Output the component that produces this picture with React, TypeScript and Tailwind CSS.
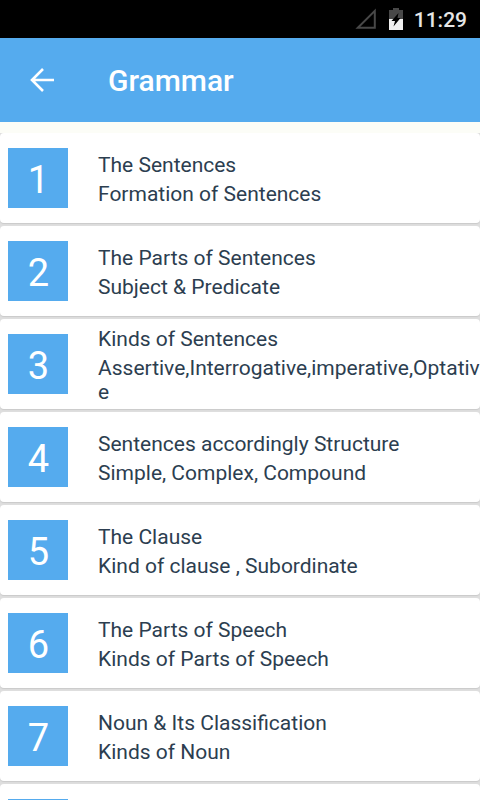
const topics = [
  { title: "The Sentences", detail: "Formation of Sentences" },
  { title: "The Parts of Sentences", detail: "Subject & Predicate" },
  { title: "Kinds of Sentences", detail: "Assertive,Interrogative,imperative,Optative" },
  { title: "Sentences accordingly Structure", detail: "Simple, Complex, Compound" },
  { title: "The Clause", detail: "Kind of clause , Subordinate" },
  { title: "The Parts of Speech", detail: "Kinds of Parts of Speech" },
  { title: "Noun & Its Classification", detail: "Kinds of Noun" },
];

function StatusBar() {
  return (
    <div className="flex h-[38px] shrink-0 items-center justify-end bg-black pr-[13px] text-[21px] font-medium text-[#e6e6e6]">
      <svg width="22" height="22" viewBox="0 0 22 22" fill="none">
        <path d="M2.8 19.8H19.8V2.8Z" stroke="#484848" strokeWidth="2" />
      </svg>
      <svg width="14" height="22" viewBox="0 0 14 22" className="ml-3">
        <path d="M4 0h6v2h4v20H0V2h4z" fill="#484848" />
        <path d="M0 11h14v11H0z" fill="#f0f0f0" />
        <path d="M9.5 5L2.5 13H6L4.5 18.5L11.5 10H8.5Z" fill="#000" />
      </svg>
      <span className="ml-[11px] pt-[3px]">11:29</span>
    </div>
  );
}

function TopicCard({ index, title, detail }: { index: number; title: string; detail: string }) {
  return (
    <div className="flex h-[90px] shrink-0 items-center rounded-[4px] bg-white pl-2 shadow-[0_1px_1px_#cacaca]">
      <div className="flex h-[60px] w-[60px] shrink-0 items-center justify-center bg-[#55abee] pl-px pt-[3px] text-[38px] leading-none text-white">
        {index}
      </div>
      <div className="ml-[30px] flex min-w-0 flex-1 flex-col gap-[5px] pt-[3px] text-[21px] leading-[24px] text-[#2c3e50]">
        <div>{title}</div>
        <div className="break-all">{detail}</div>
      </div>
    </div>
  );
}

export default function App() {
  return (
    <div className="flex h-[800px] w-[480px] flex-col overflow-hidden bg-white font-[Roboto,sans-serif]">
      <StatusBar />
      <header className="flex h-[84px] shrink-0 items-center bg-[#55abee] pl-[30px] text-white">
        <svg width="24" height="24" viewBox="0 0 24 24" fill="none" stroke="white" strokeWidth="2.6">
          <path d="M13 1L2 12L13 23M2 12H24" />
        </svg>
        <h1 className="ml-[54px] text-[30px] font-medium">Grammar</h1>
      </header>
      <div className="h-[11px] shrink-0 bg-[#fcfdf7]" />
      <main className="flex min-h-0 flex-1 flex-col gap-[3px] overflow-hidden bg-[#dedede]">
        {topics.map((topic, i) => (
          <TopicCard key={topic.title} index={i + 1} title={topic.title} detail={topic.detail} />
        ))}
        {/* Top edge of the next card */}
        <div className="h-4 shrink-0 rounded-t-[4px] bg-white pl-2 pt-[15px]">
          <div className="h-px w-[60px] bg-[#55abee]" />
        </div>
      </main>
    </div>
  );
}
